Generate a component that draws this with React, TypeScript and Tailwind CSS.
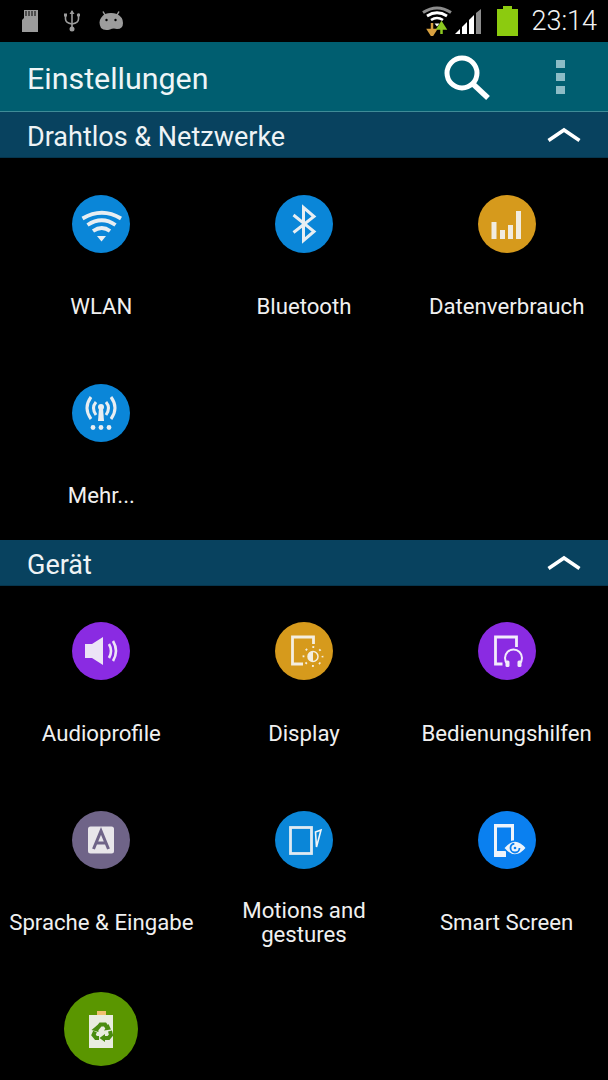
import type { ReactNode } from 'react';

const WHITE = '#e8eef2';

const WifiIcon = () => (
  <svg viewBox="0 0 58 58" className="w-full h-full" fill="none" stroke={WHITE} strokeWidth="3.8">
    <path d="M10.5 23.5 Q30 12 49 23.5" />
    <path d="M15.5 30 Q30 20.5 43.5 30" />
    <path d="M21 36 Q30 30 38 36" />
    <path d="M25 41 H34 L29.5 46.5 Z" fill={WHITE} stroke="none" />
  </svg>
);

const BluetoothIcon = () => (
  <svg viewBox="0 0 58 58" className="w-full h-full" fill="none" stroke={WHITE} strokeWidth="3">
    <path d="M18.5 20 L39 36.5 L28.5 45.5 V12.5 L39 21.5 L18.5 37.5" />
  </svg>
);

const DataIcon = () => (
  <svg viewBox="0 0 58 58" className="w-full h-full" fill="#f1ece0">
    <rect x="13.5" y="27" width="5" height="17" />
    <rect x="22" y="35" width="5" height="9" />
    <rect x="30" y="30" width="5" height="14" />
    <rect x="38" y="16" width="5" height="28" />
  </svg>
);

const MoreIcon = () => (
  <svg viewBox="0 0 58 58" className="w-full h-full" fill="none" stroke={WHITE} strokeWidth="3">
    <path d="M19 13 Q11 24 19 35" />
    <path d="M24 18 Q19 24 24 31" />
    <path d="M39 13 Q47 24 39 35" />
    <path d="M34 18 Q39 24 34 31" />
    <circle cx="29" cy="23" r="3" fill={WHITE} stroke="none" />
    <path d="M27 24 H31 L32 37 H26 Z" fill={WHITE} stroke="none" />
    <circle cx="21" cy="43.500" r="2.400" fill={WHITE} stroke="none" />
    <circle cx="29" cy="43.500" r="2.400" fill={WHITE} stroke="none" />
    <circle cx="37" cy="43.500" r="2.400" fill={WHITE} stroke="none" />
  </svg>
);

const SoundIcon = () => (
  <svg viewBox="0 0 58 58" className="w-full h-full" fill="none" stroke="#ece4f6" strokeWidth="2.6">
    <path d="M13 22 H20 L31 15 V43 L20 36 H13 Z" fill="#ece4f6" stroke="none" />
    <path d="M37 22 Q41 29 37 36" />
    <path d="M41 19 Q47 29 41 39" />
  </svg>
);

const DisplayIcon = () => (
  <svg viewBox="0 0 58 58" className="w-full h-full" fill="none" stroke="#f4eee0" strokeWidth="2.8">
    <path d="M38.500 22 V15 H17.500 V42 H28" />
    <circle cx="38" cy="34.500" r="5" strokeWidth="1.500" />
    <path d="M38 29.500 A5 5 0 0 0 38 39.500 Z" fill="#f4eee0" stroke="none" />
    <circle cx="38" cy="34.500" r="9.500" strokeWidth="1.800" strokeDasharray="2 5.460" strokeDashoffset="1" />
  </svg>
);

const HelpIcon = () => (
  <svg viewBox="0 0 58 58" className="w-full h-full" fill="none" stroke="#f2ecfb" strokeWidth="2.800">
    <path d="M38.500 25 V15 H17.500 V42 H24.500" />
    <path d="M29.500 42 A8.500 8.500 0 1 1 41.500 42" strokeWidth="2" />
    <rect x="27.500" y="38.500" width="4" height="6.500" rx="1.500" fill="#f2ecfb" stroke="none" />
    <rect x="39.500" y="38.500" width="4" height="6.500" rx="1.500" fill="#f2ecfb" stroke="none" />
  </svg>
);

const LanguageIcon = () => (
  <svg viewBox="0 0 58 58" className="w-full h-full">
    <rect x="16" y="15.500" width="26" height="27" rx="2.500" fill="#e8e6ea" />
    <path d="M21.500 38 L29 20 L36.500 38 M24 32 H34" fill="none" stroke="#6f6488" strokeWidth="3" />
  </svg>
);

const MotionIcon = () => (
  <svg viewBox="0 0 58 58" className="w-full h-full" fill="none" stroke="#dfeaf2" strokeWidth="2.800">
    <rect x="15.500" y="16.500" width="21" height="26" />
    <path d="M40.500 21 L46 19 L41.500 36 Z" stroke="#f2f6f8" strokeWidth="1.600" />
  </svg>
);

const SmartIcon = () => (
  <svg viewBox="0 0 58 58" className="w-full h-full">
    <path d="M16 13 H36 V32 H33 V16.500 H19 V40 H28 V46 H16 Z" fill="#eef4fb" />
    <path d="M25.500 37 Q37 23 48.500 37 Q37 51 25.500 37 Z" fill="#eef4fb" stroke="#0a80f0" strokeWidth="1.500" />
    <circle cx="37" cy="37" r="4.500" fill="none" stroke="#0a80f0" strokeWidth="1.800" strokeDasharray="20 8" />
    <circle cx="37" cy="37" r="1.300" fill="#0a80f0" />
  </svg>
);

const BatteryCycleIcon = () => (
  <svg viewBox="0 0 74 74" className="w-full h-full">
    <rect x="33" y="19" width="9" height="4" fill="#f0c070" />
    <rect x="25" y="23" width="24" height="33" fill="#e9ecdf" />
    <g fill="none" stroke="#4a8c10" strokeWidth="4">
      <path d="M32 38 L36.500 32.500 H41 L43.500 36" />
      <path d="M46 39 L47 43 L44.500 46 H40" />
      <path d="M35 46 H32 L29.500 43 L31 39.500" />
    </g>
    <path d="M40 38.500 L47 37.500 L44.500 32 Z M41 42 L35.500 46 L41 50 Z M27.500 38 L34.500 40 L33.500 33 Z" fill="#4a8c10" />
  </svg>
);

type Setting = { label: string; color: string; icon: ReactNode; big?: boolean };

const wireless: Setting[] = [
  { label: 'WLAN', color: 'bg-[#0a86d8]', icon: <WifiIcon /> },
  { label: 'Bluetooth', color: 'bg-[#0a86d8]', icon: <BluetoothIcon /> },
  { label: 'Datenverbrauch', color: 'bg-[#d69a1c]', icon: <DataIcon /> },
  { label: 'Mehr...', color: 'bg-[#0a86d8]', icon: <MoreIcon /> },
];

const device: Setting[] = [
  { label: 'Audioprofile', color: 'bg-[#8a2be2]', icon: <SoundIcon /> },
  { label: 'Display', color: 'bg-[#d69a1c]', icon: <DisplayIcon /> },
  { label: 'Bedienungshilfen', color: 'bg-[#8a2be2]', icon: <HelpIcon /> },
  { label: 'Sprache & Eingabe', color: 'bg-[#6f6488]', icon: <LanguageIcon /> },
  { label: 'Motions and gestures', color: 'bg-[#0a86d8]', icon: <MotionIcon /> },
  { label: 'Smart Screen', color: 'bg-[#0a80f0]', icon: <SmartIcon /> },
  { label: '', color: 'bg-[#5a9600]', icon: <BatteryCycleIcon />, big: true },
];

function SectionHeader({ title }: { title: string }) {
  return (
    <div className="h-[46px] bg-[#08425f] flex items-center justify-between pl-[27px] pr-[27px] border-b border-[#06354d]">
      <span className="text-[27px] leading-[32px] mt-[5px] text-[#eef3f5]">{title}</span>
      <svg width="34" height="16" viewBox="0 0 34 16" fill="none" stroke="#fff" strokeWidth="3.600" className="mt-[1px]">
        <path d="M1.500 13.500 L17 3 L32.500 13.500" />
      </svg>
    </div>
  );
}

function SettingCell({ item }: { item: Setting }) {
  if (item.big) {
    return (
      <div className="h-[189px] flex flex-col items-center pt-[28px]">
        <div className={`w-[74px] h-[74px] rounded-full ${item.color}`}>{item.icon}</div>
      </div>
    );
  }
  return (
    <div className="h-[189px] flex flex-col items-center pt-[36px]">
      <div className={`w-[58px] h-[58px] rounded-full shrink-0 ${item.color}`}>{item.icon}</div>
      <div className="mt-[23px] h-[60px] w-[200px] flex items-center justify-center text-center text-[22.200px] leading-[24px] text-[#f0f0f0] whitespace-nowrap">
        {item.label === 'Motions and gestures' ? (
          <span>
            Motions and
            <br />
            gestures
          </span>
        ) : (
          item.label
        )}
      </div>
    </div>
  );
}

function StatusBar() {
  return (
    <div className="h-[42px] bg-black flex items-center pl-[22px] pr-[11px] shrink-0">
      {/* sd card */}
      <svg width="16" height="22" viewBox="0 0 16 22" fill="#9c9c9c">
        <path d="M2 0 H16 V22 H0 V10 L2 8 Z" />
        <path d="M4 1 V6 M7 1 V6 M10 1 V6 M13 1 V6" stroke="#000" strokeWidth="1" />
      </svg>
      {/* usb */}
      <svg width="16" height="22" viewBox="0 0 16 22" fill="none" stroke="#9c9c9c" strokeWidth="1.600" className="ml-[26px]">
        <path d="M8 1 V19" />
        <path d="M1.500 6 V9 Q1.500 13 8 14 Q14.500 13 14.500 9 V6" />
        <circle cx="8" cy="19" r="2.500" fill="#9c9c9c" stroke="none" />
        <path d="M8 0 L5.500 4 H10.500 Z" fill="#9c9c9c" stroke="none" />
        <rect x="0" y="3.500" width="3" height="3" fill="#9c9c9c" stroke="none" />
        <circle cx="14.500" cy="5" r="1.700" fill="#9c9c9c" stroke="none" />
      </svg>
      {/* android */}
      <svg width="24" height="20" viewBox="0 0 24 20" className="ml-[19px]">
        <path d="M6 4 L4 0.500 M18 4 L20 0.500" stroke="#9c9c9c" strokeWidth="1.500" />
        <path d="M6 3 Q12 1 18 3 Q24 6 24 12 Q24 18 18 18 Q14 17 11 18.500 Q5 20 2 17 Q-1 11 2 7 Q4 4 6 3 Z" fill="#9c9c9c" />
        <circle cx="7.500" cy="9" r="1.200" fill="#000" />
        <circle cx="16.500" cy="9" r="1.200" fill="#000" />
      </svg>
      <div className="flex-1" />
      {/* wifi with data arrows */}
      <svg width="30" height="30" viewBox="0 0 30 30" fill="none" className="mb-[1px]">
        <path d="M1 6.500 Q15 -2.500 29 6.500" stroke="#8c8c8c" strokeWidth="3" />
        <path d="M5 10 Q15 3.500 25 10" stroke="#fff" strokeWidth="2.800" />
        <path d="M9 14 Q15 10 21 14" stroke="#fff" strokeWidth="2.600" />
        <path d="M12.500 17.500 H17.500 L15 20.500 Z" fill="#fff" />
        <path d="M10 17 V27 M6.500 24 L10 29.500 L13.500 24 Z" stroke="#d8a040" strokeWidth="2.500" fill="#d8a040" />
        <path d="M19.500 28 V20 M16 22.500 L19.500 17 L23 22.500 Z" stroke="#8cc820" strokeWidth="2.500" fill="#8cc820" />
      </svg>
      {/* signal */}
      <svg width="27" height="26" viewBox="0 0 27 26" className="ml-[3px]">
        <path d="M0 26 L5 21 V26 Z" fill="#fff" />
        <path d="M7 19 L12 14 V26 H7 Z" fill="#fff" />
        <path d="M14 12 L19 7 V26 H14 Z" fill="#fff" />
        <path d="M21 5 L26 1 V26 H21 Z" fill="#8c8c8c" />
      </svg>
      {/* battery */}
      <svg width="21" height="30" viewBox="0 0 21 30" className="ml-[15px]">
        <path d="M6 0 H15 V3 H21 V30 H0 V3 H6 Z" fill="#8ccb0f" />
      </svg>
      <span className="ml-[13px] text-[27px] font-light text-[#f2f2f2] leading-none">23:14</span>
    </div>
  );
}

export default function App() {
  return (
    <div className="w-[608px] h-[1080px] overflow-hidden bg-black font-['Roboto',sans-serif]">
      <StatusBar />

      {/* Action bar */}
      <div className="h-[70px] bg-[#005e70] border-b border-[#3f8b97] flex items-center pl-[27px]">
        <span className="text-[30.400px] leading-[36px] mt-[5px] text-[#eef5f6] flex-1">Einstellungen</span>
        <svg width="50" height="48" viewBox="0 0 50 48" fill="none" stroke="#fff" className="mr-[64px] mt-[2px]">
          <circle cx="20" cy="19" r="15" strokeWidth="5" />
          <path d="M31 30 L46 44" strokeWidth="5.500" />
        </svg>
        <div className="flex flex-col gap-[5px] mr-[43px] mt-[1px]">
          <div className="w-[9px] h-[8px] bg-[#8cbcc6]" />
          <div className="w-[9px] h-[8px] bg-[#8cbcc6]" />
          <div className="w-[9px] h-[8px] bg-[#8cbcc6]" />
        </div>
      </div>

      <SectionHeader title="Drahtlos & Netzwerke" />
      <div className="grid grid-cols-3 pt-[1px] pb-[3px]">
        {wireless.map((item) => (
          <SettingCell key={item.label} item={item} />
        ))}
      </div>

      <SectionHeader title="Gerät" />
      <div className="grid grid-cols-3">
        {device.map((item) => (
          <SettingCell key={item.label} item={item} />
        ))}
      </div>
    </div>
  );
}
